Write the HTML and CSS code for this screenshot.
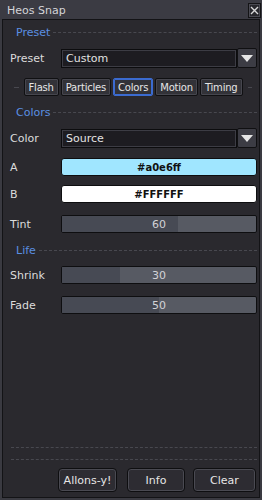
FILE: index.html
```html
<!DOCTYPE html>
<html lang="en">
<head>
    <meta charset="UTF-8">
    <title>Heos Snap</title>
    <link rel="stylesheet" href="styles.css">
</head>
<body>
    <div class="window">
        <div class="titlebar">
            <span class="title">Heos Snap</span>
            <span class="close-btn">
                <svg width="9" height="9" viewBox="0 0 9 9"><path d="M1 1L8 8M8 1L1 8" stroke="#d8d8d8" stroke-width="1.4" fill="none"/></svg>
            </span>
        </div>
        <div class="panel">
            <div class="section-head"><span>Preset</span></div>
            <div class="row row-drop">
                <label>Preset</label>
                <div class="dropdown"><span>Custom</span></div>
                <div class="drop-arrow"><svg width="12" height="7" viewBox="0 0 12 7"><path d="M0 0H12L6 7Z" fill="#e6e6e6"/></svg></div>
            </div>
            <div class="tabbar">
                <span class="dash"></span>
                <div class="tab">Flash</div>
                <div class="tab">Particles</div>
                <div class="tab active">Colors</div>
                <div class="tab">Motion</div>
                <div class="tab">Timing</div>
                <span class="dash"></span>
            </div>

            <div class="section-head head-colors"><span>Colors</span></div>
            <div class="row row-drop">
                <label>Color</label>
                <div class="dropdown"><span>Source</span></div>
                <div class="drop-arrow"><svg width="12" height="7" viewBox="0 0 12 7"><path d="M0 0H12L6 7Z" fill="#e6e6e6"/></svg></div>
            </div>
            <div class="row row-a">
                <label>A</label>
                <div class="swatch swatch-a">#a0e6ff</div>
            </div>
            <div class="row row-b">
                <label>B</label>
                <div class="swatch swatch-b">#FFFFFF</div>
            </div>
            <div class="row row-tint">
                <label>Tint</label>
                <div class="slider"><div class="fill" style="width: 60%"></div><span>60</span></div>
            </div>

            <div class="section-head head-life"><span>Life</span></div>
            <div class="row row-shrink">
                <label>Shrink</label>
                <div class="slider"><div class="fill" style="width: 30%"></div><span>30</span></div>
            </div>
            <div class="row row-fade">
                <label>Fade</label>
                <div class="slider"><div class="fill" style="width: 50%"></div><span>50</span></div>
            </div>

            <div class="spacer"></div>
            <div class="rule"></div>
            <div class="rule"></div>
            <div class="footer">
                <div class="btn btn-go">Allons-y!</div>
                <div class="btn btn-info">Info</div>
                <div class="btn btn-clear">Clear</div>
            </div>
        </div>
    </div>
</body>
</html>
```

FILE: styles.css
```css
body {
    margin: 0;
    background: #3a3a41;
    font-family: 'DejaVu Sans', 'Liberation Sans', sans-serif;
    font-size: 11px;
    color: #dcdcdc;
}
.window {
    width: 262px;
    height: 500px;
    display: flex;
    flex-direction: column;
    box-sizing: border-box;
}
.titlebar {
    height: 19px;
    flex: none;
    display: flex;
    align-items: center;
    padding-left: 7px;
    background: #3b3b43;
    box-sizing: border-box;
}
.title {
    flex: 1;
    color: #d4d4d8;
    font-size: 11px;
    margin-top: 1px;
}
.close-btn {
    width: 11px;
    height: 13px;
    margin-right: 1px;
    margin-top: 2px;
    background: #27272c;
    border: 1px solid #141416;
    box-shadow: inset 0 0 0 1px #4a4a52;
    display: flex;
    align-items: center;
    justify-content: center;
}

/* main panel */
.panel {
    flex: 1;
    display: flex;
    flex-direction: column;
    margin: 0 2px 2px 2px;
    border: 1px solid #131316;
    background: #2a292e;
    padding: 0 2px 0 1px;
}
.section-head {
    height: 14px;
    margin-top: 5px;
    display: flex;
    align-items: center;
    padding-left: 12px;
    color: #5b8fe2;
    font-size: 11px;
}
.section-head::after {
    content: "";
    flex: 1;
    border-top: 1px dashed #48484f;
    margin-left: 3px;
}
.head-colors { margin-top: 9px; }
.head-life { margin-top: 10px; }
.row {
    display: flex;
    align-items: center;
    height: 18px;
    margin-top: 10px;
}
.row label {
    width: 57px;
    flex: none;
    padding-left: 6px;
    box-sizing: border-box;
}
.row-drop { height: 20px; margin-top: 9px; }
.row-a { margin-top: 10px; }
.row-b { margin-top: 9px; }
.row-tint { margin-top: 12px; }
.row-shrink { margin-top: 9px; }
.row-fade { margin-top: 12px; }

.dropdown {
    flex: 1;
    height: 19px;
    box-sizing: border-box;
    background: #1d1c21;
    border: 1px solid #0c0c0e;
    box-shadow: inset 0 0 0 1px #3c3c44;
    display: flex;
    align-items: center;
    padding-left: 4px;
    color: #e2e2e2;
}
.drop-arrow {
    width: 20px;
    height: 20px;
    flex: none;
    box-sizing: border-box;
    background: #3c3c44;
    border: 1px solid #101012;
    border-radius: 2px;
    display: flex;
    align-items: center;
    justify-content: center;
}

/* tabs */
.tabbar {
    display: flex;
    align-items: center;
    margin-top: 10px;
    gap: 2px;
    padding: 0 2px 0 7px;
}
.tabbar .dash {
    flex: 1;
    border-top: 1px dashed #48484f;
    margin: 0 3px;
}
.tab {
    height: 18px;
    box-sizing: border-box;
    padding: 0 4px;
    background: #323238;
    border: 1px solid #101012;
    box-shadow: inset 0 0 0 1px #46464e;
    border-radius: 2px;
    font-size: 10px;
    letter-spacing: -0.2px;
    color: #e6e6e6;
    display: flex;
    align-items: center;
}
.tab.active {
    border-color: #3b6bd0;
    box-shadow: inset 0 0 0 1px #3b6bd0;
}

/* colour swatches */
.swatch {
    flex: 1;
    height: 18px;
    box-sizing: border-box;
    border: 1px solid #0e0e10;
    border-radius: 3px;
    display: flex;
    align-items: center;
    justify-content: center;
    font-size: 10px;
    font-weight: bold;
    color: #111;
}
.swatch-a { background: #a0e6ff; }
.swatch-b { background: #ffffff; }

/* sliders */
.slider {
    flex: 1;
    height: 18px;
    position: relative;
    box-sizing: border-box;
    background: #575a63;
    border: 1px solid #0e0e10;
    border-radius: 2px;
    overflow: hidden;
    display: flex;
    align-items: center;
    justify-content: center;
}
.slider .fill {
    position: absolute;
    left: 0;
    top: 0;
    bottom: 0;
    background: #474a54;
}
.slider span {
    position: relative;
    color: #d2d2d6;
}

/* footer */
.spacer { flex: 1; }
.rule {
    border-top: 1px dashed #48484f;
    margin: 0 0 11px 7px;
}
.rule + .rule { margin-bottom: 8px; }
.footer {
    display: flex;
    justify-content: flex-end;
    margin-bottom: 5px;
    padding-right: 1px;
}
.btn {
    height: 24px;
    box-sizing: border-box;
    background: #2d2c32;
    border: 1px solid #0e0e10;
    box-shadow: inset 0 0 0 1px #4a4a52;
    border-radius: 4px;
    display: flex;
    align-items: center;
    justify-content: center;
    color: #e6e6e6;
}
.btn-go { width: 59px; }
.btn-info { width: 58px; margin-left: 10px; }
.btn-clear { width: 63px; margin-left: 8px; }
```
